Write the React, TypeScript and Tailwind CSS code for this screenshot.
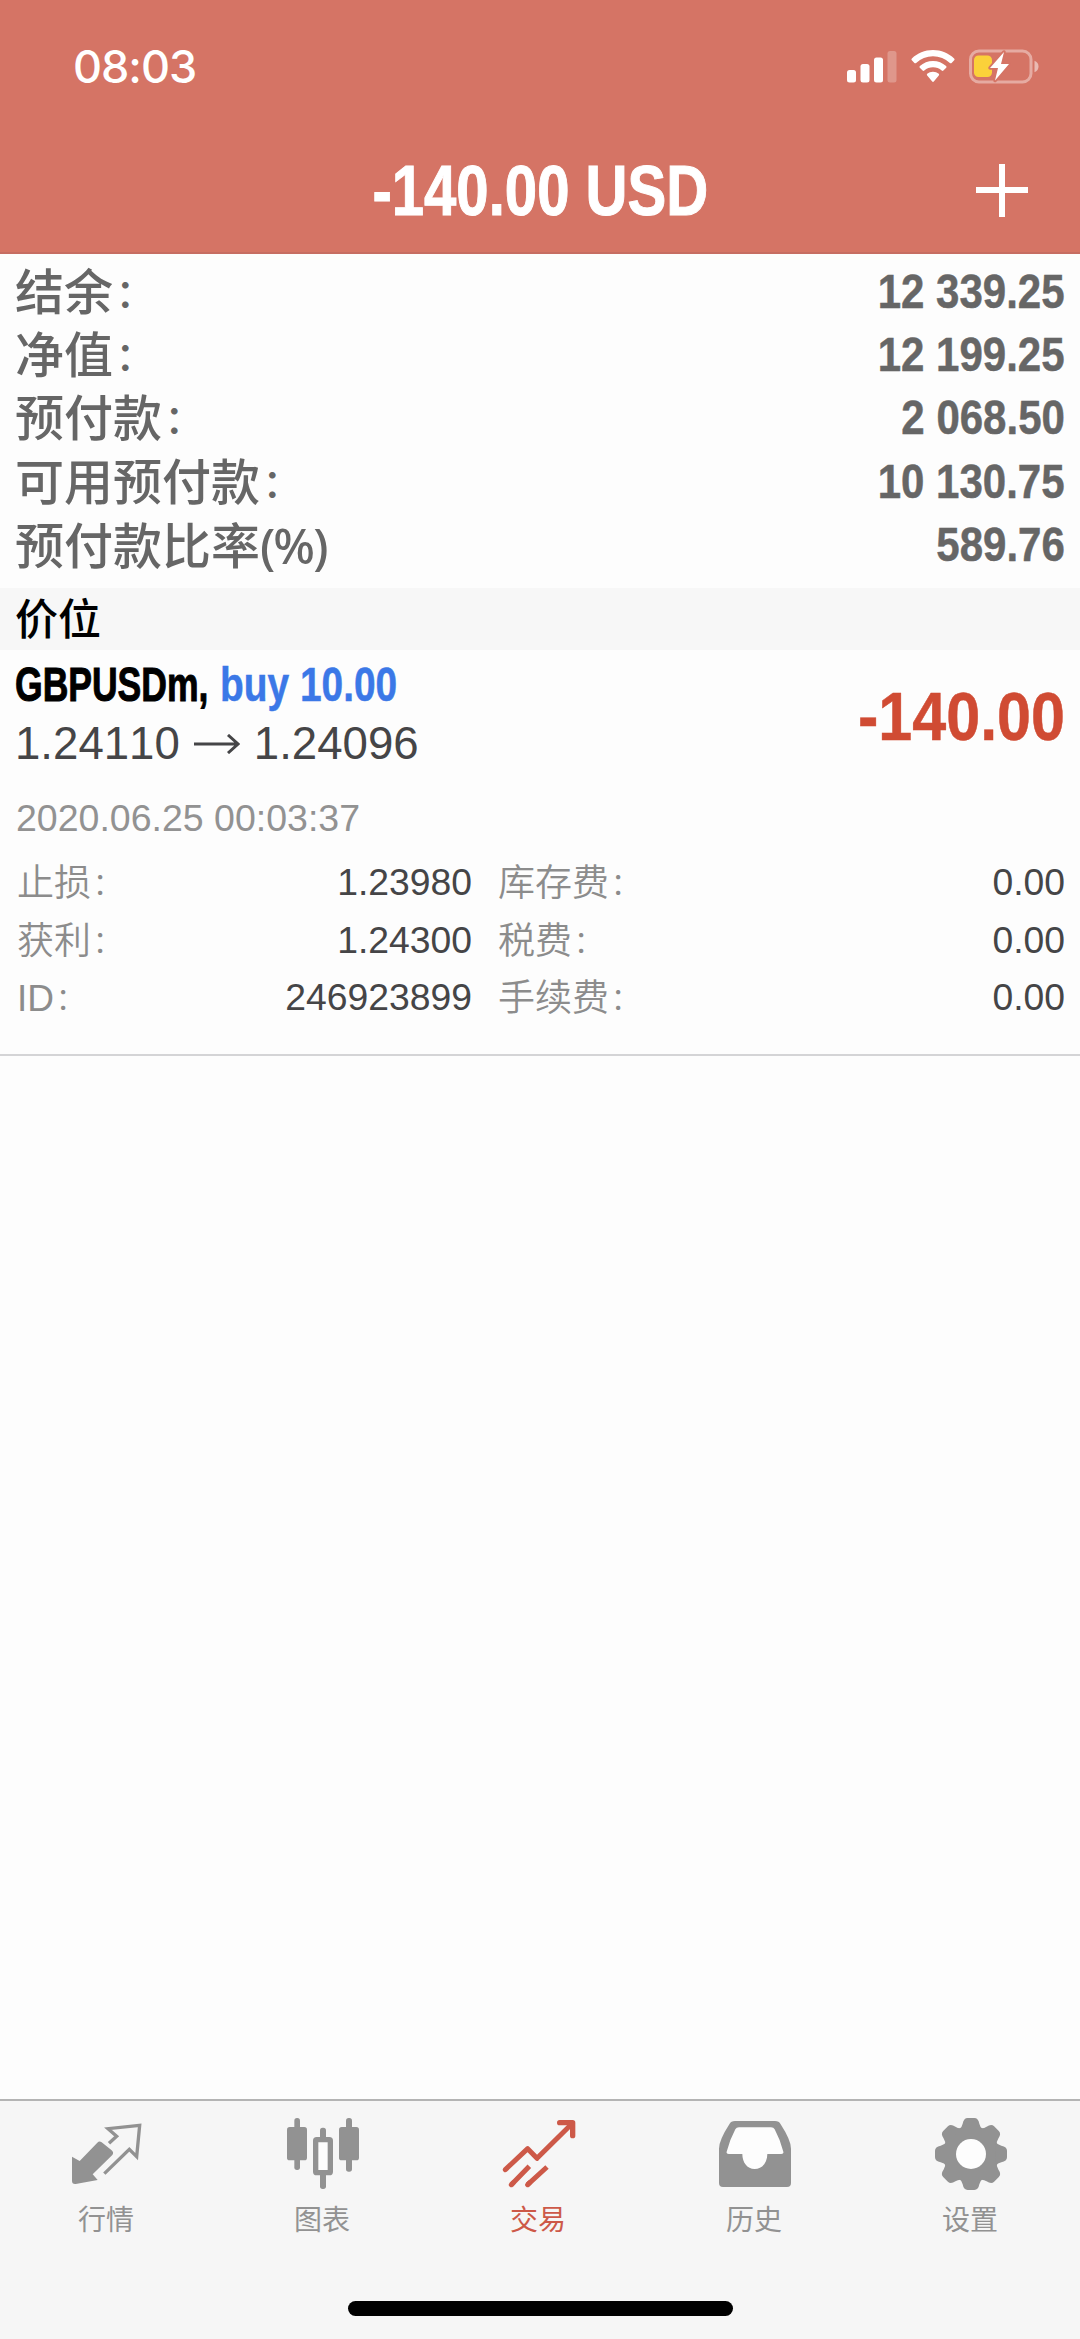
import type { ReactNode } from "react";

interface SummaryRow {
  label: string;
  unit?: string;
  value: string;
}

const summary: SummaryRow[] = [
  { label: "结余", value: "12 339.25" },
  { label: "净值", value: "12 199.25" },
  { label: "预付款", value: "2 068.50" },
  { label: "可用预付款", value: "10 130.75" },
  { label: "预付款比率", unit: "(%)", value: "589.76" },
];

const details = [
  { label: "止损", value: "1.23980", feeLabel: "库存费", fee: "0.00" },
  { label: "获利", value: "1.24300", feeLabel: "税费", fee: "0.00" },
  { label: "ID", value: "246923899", feeLabel: "手续费", fee: "0.00" },
];

function Colon() {
  return <span className="inline-block origin-[25%_50%] scale-[0.8]">：</span>;
}

function SignalIcon() {
  return (
    <svg width="50" height="33" viewBox="0 0 50 33" fill="#fff">
      <rect x="0" y="20" width="9" height="12.5" rx="2.5" />
      <rect x="13.5" y="14" width="9" height="18.5" rx="2.5" />
      <rect x="27" y="7.5" width="9" height="25" rx="2.5" />
      <rect x="40.5" y="1" width="9" height="31.5" rx="2.5" opacity="0.25" />
    </svg>
  );
}

function WifiIcon() {
  return (
    <svg width="44" height="33" viewBox="0 0 44 33" fill="#fff">
      <path d="M22 0C13.8 0 6.300 3.200 .9 8.400Q0 9.300 .8 10.200L3.400 12.900Q4.200 13.700 5.100 12.900A24.500 24.500 0 0 1 38.900 12.900Q39.800 13.700 40.600 12.900L43.200 10.200Q44 9.300 43.100 8.400C37.700 3.200 30.200 0 22 0Z" />
      <path d="M22 11C17 11 12.400 12.900 8.900 16.100Q8 17 8.800 17.800L11.600 20.600Q12.400 21.300 13.300 20.600A13.200 13.200 0 0 1 30.700 20.600Q31.600 21.300 32.400 20.600L35.200 17.800Q36 17 35.100 16.100C31.600 12.900 27 11 22 11Z" />
      <path d="M22 21.800C19.800 21.800 17.800 22.600 16.200 23.800Q15.400 24.600 16.200 25.400L21.200 31.500Q22 32.400 22.800 31.500L27.800 25.400Q28.600 24.600 27.800 23.800C26.200 22.600 24.200 21.800 22 21.800Z" />
    </svg>
  );
}

function BatteryIcon() {
  return (
    <svg width="71" height="35" viewBox="0 0 71 35">
      <rect x="1.500" y="2" width="60.500" height="31" rx="8.500" fill="none" stroke="#fff" strokeOpacity="0.4" strokeWidth="3" />
      <path d="M65.500 11.800Q69.500 13.500 69.500 17.500T65.500 23.200Z" fill="#fff" fillOpacity="0.5" />
      <rect x="5" y="6.500" width="18" height="21.500" rx="4.500" fill="#fbd13a" />
      <path
        d="M35 3L21 19H29L26 31.500L40 15H32Z"
        fill="#fff"
        stroke="#d57465"
        strokeWidth="3.500"
        strokeLinejoin="round"
        paintOrder="stroke"
      />
    </svg>
  );
}

function IconFrame({ children }: { children: ReactNode }) {
  return (
    <svg width="80" height="80" viewBox="0 0 240 240" fill="currentColor">
      {children}
    </svg>
  );
}

function QuotesIcon() {
  return (
    <IconFrame>
      <path d="M15 134L38 147L91 92Q97 85 104 91L133 114Q142 121 136 129L77 187L92 204L26 216Q15 217 15 207Z" />
      <path d="M126 94L149 73L123 50L218 40L209 134L187 112L112 185" fill="none" stroke="currentColor" strokeWidth="10" />
    </IconFrame>
  );
}

function ChartIcon() {
  return (
    <IconFrame>
      <rect x="12" y="45" width="60" height="100" rx="8" />
      <rect x="34" y="18" width="17" height="156" rx="8" />
      <rect x="111" y="47" width="18" height="50" rx="8" />
      <rect x="111" y="180" width="18" height="51" rx="8" />
      <rect x="98" y="83" width="44" height="99" rx="3" fill="#fdfdfd" stroke="currentColor" strokeWidth="16" />
      <rect x="168" y="45" width="60" height="100" rx="8" />
      <rect x="189" y="18" width="18" height="161" rx="8" />
    </IconFrame>
  );
}

function TradeIcon() {
  return (
    <IconFrame>
      <g fill="none" stroke="currentColor" strokeWidth="15" strokeLinejoin="round">
        <path d="M19 173L86 110L114 139L218 36" strokeLinecap="round" />
        <path d="M182 32H221V71" strokeWidth="16" strokeLinecap="round" />
        <path d="M37 218L91 163M86 218L144 165" />
        <path d="M37 218L42 213M86 218L91 213" strokeLinecap="round" />
      </g>
    </IconFrame>
  );
}

function HistoryIcon() {
  return (
    <IconFrame>
      <path d="M60 27H180Q192 27 197 37Q228 85 228 110V213Q228 225 216 225H24Q12 225 12 213V110Q12 85 43 37Q48 27 60 27Z" />
      <path d="M72 46H168Q176 46 179 52Q196 84 205 119Q207 126 199 126H157C157 151 142 171 119 171S82 151 82 126H41Q33 126 35 119Q44 84 61 52Q64 46 72 46Z" fill="#fdfdfd" />
    </IconFrame>
  );
}

function SettingsIcon() {
  return (
    <IconFrame>
      <g transform="translate(120 126)">
        <circle r="82" />
        {[0, 45, 90, 135, 180, 225, 270, 315].map((angle) => (
          <path
            key={angle}
            transform={`rotate(${angle})`}
            d="M-36 -74Q-27 -80 -25 -91Q-22 -108 -10 -108H10Q22 -108 25 -91Q27 -80 36 -74Z"
          />
        ))}
        <circle r="45" fill="#fdfdfd" />
      </g>
    </IconFrame>
  );
}

const tabs = [
  { label: "行情", icon: <QuotesIcon />, active: false },
  { label: "图表", icon: <ChartIcon />, active: false },
  { label: "交易", icon: <TradeIcon />, active: true },
  { label: "历史", icon: <HistoryIcon />, active: false },
  { label: "设置", icon: <SettingsIcon />, active: false },
];

function Header() {
  return (
    <header className="h-[254px] border-b-2 border-[#c66d62] bg-[#d57465] text-white">
      <div className="flex h-[132px] items-center justify-between pl-[73px] pr-[40px]">
        <span className="font-['Inter'] text-[45px] font-medium leading-none tracking-[-0.023em]">08:03</span>
        <div className="flex items-center gap-[14px]">
          <SignalIcon />
          <WifiIcon />
          <BatteryIcon />
        </div>
      </div>
      <div className="grid h-[118px] grid-cols-[1fr_auto_1fr] items-center">
        <h1 className="col-start-2 scale-x-[0.83] whitespace-nowrap text-[70px] font-bold leading-none [-webkit-text-stroke:1px]">
          -140.00 USD
        </h1>
        <svg className="mr-[51px] justify-self-end" width="54" height="54" viewBox="0 0 54 54" stroke="#fff" strokeWidth="6">
          <path d="M1 26H53M27 0V53" />
        </svg>
      </div>
    </header>
  );
}

function Summary() {
  return (
    <section className="h-[334px] pl-[15px] pr-[15px] pt-[6px] text-[#666]">
      {summary.map((row) => (
        <div key={row.label} className="flex h-[63.400px] items-center justify-between">
          <span className="pt-[3px] text-[49px] font-medium leading-none">
            {row.label}
            {row.unit ? <span className="font-['Noto_Sans'] tracking-[-0.04em]">{row.unit}</span> : <Colon />}
          </span>
          <span className="origin-right scale-x-[0.875] text-[48px] font-bold leading-none [-webkit-text-stroke:0.500px]">{row.value}</span>
        </div>
      ))}
    </section>
  );
}

function Position() {
  return (
    <section className="h-[406px] border-b-2 border-[#d4d4d6] pl-[15px] pr-[15px] pt-[9px]">
      <div className="flex justify-between">
        <div>
          <div className="flex h-[52px] items-center text-[48px] font-bold leading-none">
            <span className="w-[205px] origin-left scale-x-[0.74] whitespace-nowrap [-webkit-text-stroke:1px]">GBPUSDm,</span>
            <span className="origin-left scale-x-[0.81] whitespace-nowrap text-[#3b78e7] [-webkit-text-stroke:0.500px]">buy 10.00</span>
          </div>
          <div className="mt-[7px] flex h-[52px] items-center text-[45.600px] leading-none text-[#454547] [font-kerning:none]">
            <span>1.24110</span>
            <svg className="ml-[14px] mr-[14px]" width="46" height="20" viewBox="0 0 46 20" fill="none" stroke="currentColor" strokeWidth="3">
              <path d="M0 10H44M34 1L44 10L34 19" />
            </svg>
            <span>1.24096</span>
          </div>
        </div>
        <div className="flex h-[114px] items-center">
          <span className="origin-right scale-x-[0.885] text-[69px] font-bold leading-none text-[#d04b33] [-webkit-text-stroke:0.500px]">
            -140.00
          </span>
        </div>
      </div>
      <div className="mt-[20px] flex h-[52px] items-center pl-px text-[37.500px] leading-none text-[#929292]">2020.06.25 00:03:37</div>
      <div className="mt-[9px]">
        {details.map((row) => (
          <div key={row.label} className="grid h-[57.600px] grid-cols-[457px_1fr] items-center gap-x-[26px] text-[37.300px] leading-none text-[#454547]">
            <div className="flex items-center justify-between">
              <span className="pl-[2px] pt-[2px] text-[37px] font-[350] text-[#8c8c8c]">
                {row.label}
                <Colon />
              </span>
              <span>{row.value}</span>
            </div>
            <div className="flex items-center justify-between">
              <span className="pt-[2px] text-[37px] font-[350] text-[#8c8c8c]">
                {row.feeLabel}
                <Colon />
              </span>
              <span>{row.fee}</span>
            </div>
          </div>
        ))}
      </div>
    </section>
  );
}

function TabBar() {
  return (
    <nav className="mt-auto flex h-[240px] flex-col items-center border-t-2 border-[#b4b4b4] bg-[#f6f6f6]">
      <div className="grid w-full -translate-x-px grid-cols-5 pt-[11px]">
        {tabs.map((tab) => (
          <div
            key={tab.label}
            className={`flex flex-col items-center ${tab.active ? "text-[#cd5948]" : "text-[#929292]"}`}
          >
            {tab.icon}
            <span className="mt-[15px] pr-[2px] text-[28px] leading-none">{tab.label}</span>
          </div>
        ))}
      </div>
      <div className="mb-[23px] mt-auto h-[15px] w-[385px] rounded-full bg-black" />
    </nav>
  );
}

export default function App() {
  return (
    <div className="flex h-[2339px] w-[1080px] flex-col overflow-hidden bg-[#fdfdfd] font-['Liberation_Sans','Noto_Sans_CJK_SC',sans-serif]">
      <Header />
      <Summary />
      <div className="flex h-[62px] items-center bg-[#f7f7f7] pl-[15px] pt-[3px] text-[43px] font-medium leading-none text-black">价位</div>
      <Position />
      <TabBar />
    </div>
  );
}
